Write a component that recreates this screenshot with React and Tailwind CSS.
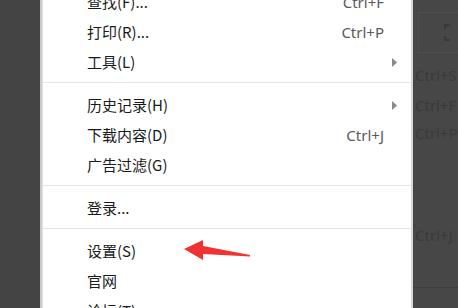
import React from "react";

const items = [
  { label: "查找(F)...", key: "Ctrl+F" },
  { label: "打印(R)...", key: "Ctrl+P" },
  { label: "工具(L)", sub: true },
  { sep: true },
  { label: "历史记录(H)", sub: true },
  { label: "下载内容(D)", key: "Ctrl+J" },
  { label: "广告过滤(G)" },
  { sep: true },
  { label: "登录..." },
  { sep: true },
  { label: "设置(S)" },
  { label: "官网" },
  { label: "论坛(T)" },
];

const cjk = { fontFamily: '"Noto Sans CJK SC", "Noto Sans", sans-serif' };
const latin = { fontFamily: '"Noto Sans", "Liberation Sans", sans-serif' };

const MenuRow = ({ item }) => {
  if (item.sep) {
    return (
      <div className="pt-[5px] pb-[7px]">
        <div className="h-px bg-[#e4e4e4]" />
      </div>
    );
  }
  return (
    <div className="h-[30px] flex items-center pl-[44px] pr-[27px]">
      <span className="flex-1 text-[15px] text-[#1a1a1a]" style={cjk}>
        {item.label}
      </span>
      {item.key && (
        <span className="text-[15px] text-[#5a5a5a]" style={latin}>
          {item.key}
        </span>
      )}
      {item.sub && (
        <svg width="5" height="9" viewBox="0 0 5 9" className="mr-[-13px]">
          <path d="M0 0 L5 4.5 L0 9 Z" fill="#8a8a8a" />
        </svg>
      )}
    </div>
  );
};

export default function App() {
  return (
    <div className="relative w-[458px] h-[308px] overflow-hidden flex bg-[#474747]">
      {/* left dark page */}
      <div className="w-[40px] bg-[#444444]" />

      {/* menu */}
      <div className="w-[373px] flex border-l-2 border-[#cbcbcb] border-r-2 border-r-[#d6d6d6] bg-white">
        <div className="flex-1 border-l border-[#e2e2e2]">
          <div className="mt-[-13px]">
            {items.map((it, i) => (
              <MenuRow key={i} item={it} />
            ))}
          </div>
        </div>
      </div>

      {/* right dark page */}
      <div className="flex-1 flex flex-col text-[15px] text-[#3a3a3a]" style={latin}>
        <div className="mt-[12px] ml-[5px] h-[41px] border border-[#4f4f4f] border-r-0 flex items-center pl-[24px]">
          <svg width="8" height="20" viewBox="0 0 8 20">
            <path d="M7 2 H2 V6" stroke="#383838" strokeWidth="2" fill="none" />
            <path d="M2 13 V17 H7" stroke="#383838" strokeWidth="2" fill="none" />
          </svg>
        </div>
        <div className="mt-[12px] pl-[2px] leading-[20px]">Ctrl+S</div>
        <div className="mt-[10px] pl-[2px] leading-[20px]">Ctrl+F</div>
        <div className="mt-[8px] pl-[2px] leading-[20px]">Ctrl+P</div>
        <div className="mt-[82px] pl-[2px] leading-[20px]">Ctrl+J</div>
        <div className="mt-[42px] h-px bg-[#3d3d3d]" />
      </div>

      {/* red annotation arrow */}
      <svg className="absolute left-0 top-0" width="458" height="308" viewBox="0 0 458 308">
        <path
          d="M184 249 L203 240 L203 246 L250 255 L250 256.5 L203 254 L203 260 Z"
          fill="#f03232"
        />
      </svg>
    </div>
  );
}
